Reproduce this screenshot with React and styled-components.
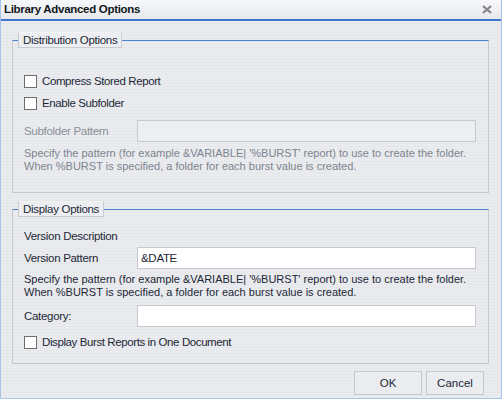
import React from "react";
import styled, { createGlobalStyle } from "styled-components";

const GlobalStyle = createGlobalStyle`
  html, body {
    margin: 0;
    padding: 0;
    background: #e8eaed;
  }
  * {
    box-sizing: border-box;
  }
`;

const CloseIcon = () => (
  <svg width="10" height="9" viewBox="0 0 10 9">
    <path d="M1 1 L9 8 M9 1 L1 8" stroke="#858585" strokeWidth="2.2" />
  </svg>
);

const App = () => {
  return (
    <>
      <GlobalStyle />
      <Dialog>
        <TitleBar>
          <Title>Library Advanced Options</Title>
          <CloseButton>
            <CloseIcon />
          </CloseButton>
        </TitleBar>

        <Body>
          {/* 배포 옵션 */}
          <Group $bottom={19}>
            <Legend>Distribution Options</Legend>
            <Spacer $h={22} />
            <CheckRow>
              <Box />
              <span>Compress Stored Report</span>
            </CheckRow>
            <CheckRow>
              <Box />
              <span>Enable Subfolder</span>
            </CheckRow>
            <FieldRow $h={28} $top={3}>
              <Label $disabled>Subfolder Pattern</Label>
              <TextInput disabled />
            </FieldRow>
            <Help $top={2} $disabled>
              Specify the pattern (for example &amp;VARIABLE| '%BURST' report) to use to create the folder.
              <br />
              When %BURST is specified, a folder for each burst value is created.
            </Help>
          </Group>

          {/* 표시 옵션 */}
          <Group $bottom={10} $top={8}>
            <Legend>Display Options</Legend>
            <Spacer $h={9} />
            <FieldRow $h={20}>
              <Label>Version Description</Label>
            </FieldRow>
            <FieldRow $h={24}>
              <Label>Version Pattern</Label>
              <TextInput defaultValue="&DATE" />
            </FieldRow>
            <Help $top={3}>
              Specify the pattern (for example &amp;VARIABLE| '%BURST' report) to use to create the folder.
              <br />
              When %BURST is specified, a folder for each burst value is created.
            </Help>
            <FieldRow $h={24} $top={5}>
              <Label>Category:</Label>
              <TextInput />
            </FieldRow>
            <CheckRow $top={3}>
              <Box />
              <span>Display Burst Reports in One Document</span>
            </CheckRow>
          </Group>
        </Body>

        <Footer>
          <Button $w={68}>OK</Button>
          <Button $w={58}>Cancel</Button>
        </Footer>
      </Dialog>
    </>
  );
};

export default App;

const Dialog = styled.div`
  width: 502px;
  height: 399px;
  overflow: hidden;
  border-left: 1px solid #a6c4e6;
  border-right: 1px solid #a6c4e6;
  border-bottom: 1px solid #a6c4e6;
  background: repeating-linear-gradient(
    to bottom,
    #e9ebee 0px,
    #e9ebee 2px,
    #e5e7eb 2px,
    #e5e7eb 3px
  );
  font-family: "Liberation Sans", Arial, sans-serif;
  font-size: 11px;
  letter-spacing: -0.3px;
  color: #1c2736;
  display: flex;
  flex-direction: column;
`;

const TitleBar = styled.div`
  height: 21px;
  flex: none;
  display: flex;
  align-items: center;
  justify-content: space-between;
  padding: 0 9px 2px 3px;
  background: linear-gradient(to bottom, #f7f8fa, #e6e8ec);
  border-bottom: 2px solid #3d77cb;
`;

const Title = styled.div`
  font-weight: bold;
  font-size: 11.5px;
  letter-spacing: -0.3px;
  color: #101820;
`;

const CloseButton = styled.div`
  display: flex;
  align-items: center;
  margin-top: 2px;
`;

const Body = styled.div`
  padding: 11px 12px 0 11px;
`;

const Group = styled.fieldset`
  margin: ${(p) => p.$top || 0}px 0 0 0;
  padding: 0 11px ${(p) => p.$bottom}px 5px;
  border: 1px solid #c5c8cc;
  border-top-color: #4a80d0;
  min-width: 0;
`;

const Legend = styled.legend`
  height: 16px;
  padding: 0 4px;
  line-height: 14px;
  font-size: 11.5px;
  border: 1px solid #c8cbcf;
  border-top-color: #f2f3f5;
  background: #eceef1;
  color: #1c2736;
`;

const Spacer = styled.div`
  height: ${(p) => p.$h}px;
`;

const CheckRow = styled.label`
  display: flex;
  align-items: center;
  gap: 5px;
  height: 22px;
  margin-top: ${(p) => p.$top || 0}px;
  padding-left: 6px;
  font-size: 11.5px;
  letter-spacing: -0.4px;
`;

const Box = styled.span`
  width: 13px;
  height: 13px;
  border: 1px solid #6e6e6e;
  background: #ffffff;
  flex: none;
`;

const FieldRow = styled.div`
  display: flex;
  align-items: center;
  height: ${(p) => p.$h}px;
  margin-top: ${(p) => p.$top || 0}px;
  padding-left: 6px;
`;

const Label = styled.span`
  width: 113px;
  font-size: 11.5px;
  color: ${(p) => (p.$disabled ? "#8a9099" : "#1c2736")};
`;

const TextInput = styled.input`
  width: 339px;
  height: 22px;
  border: 1px solid #c6c9cd;
  background: ${(p) => (p.disabled ? "#eceef0" : "#ffffff")};
  padding: 0 3px;
  font-family: "Liberation Sans", Arial, sans-serif;
  font-size: 11.5px;
  letter-spacing: -0.3px;
  color: #1c2736;
  outline: none;
`;

const Help = styled.p`
  margin: ${(p) => p.$top || 0}px 0 0 0;
  padding-left: 6px;
  font-size: 11px;
  letter-spacing: 0;
  line-height: 13px;
  white-space: nowrap;
  color: ${(p) => (p.$disabled ? "#7d848e" : "#1c2736")};
`;

const Footer = styled.div`
  display: flex;
  justify-content: flex-end;
  gap: 4px;
  padding: 7px 17px 0 0;
`;

const Button = styled.button`
  width: ${(p) => p.$w}px;
  height: 24px;
  border: 1px solid #c4c7cb;
  background: #eaecef;
  font-family: "Liberation Sans", Arial, sans-serif;
  font-size: 11.5px;
  color: #1c2736;
  padding: 0;
`;
